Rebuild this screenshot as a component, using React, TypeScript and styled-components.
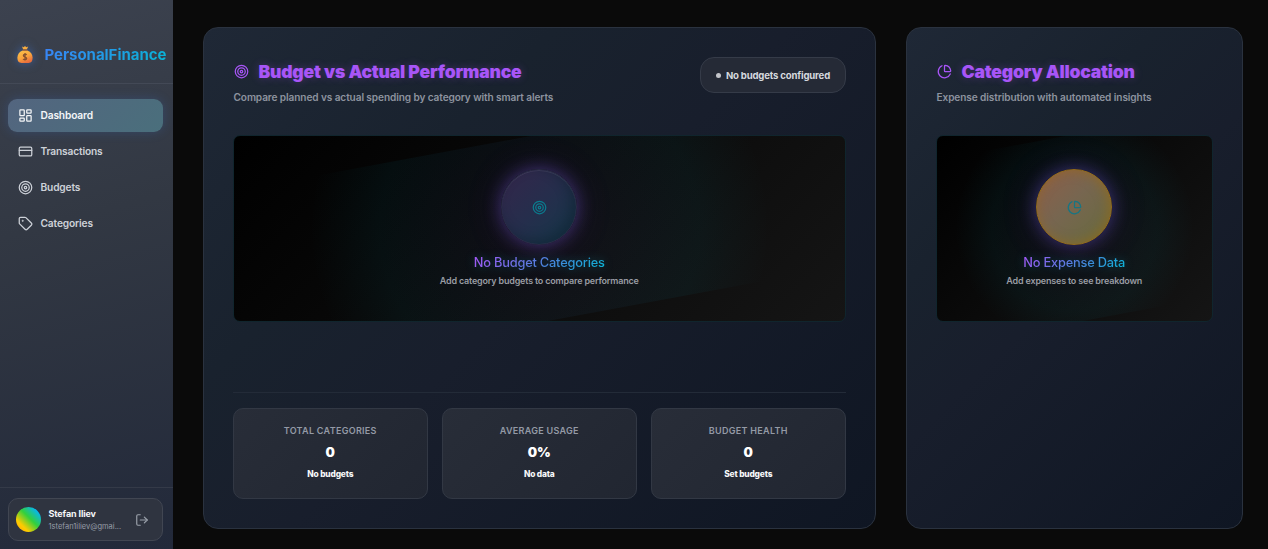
import React from 'react';
import styled, { createGlobalStyle, css } from 'styled-components';
import { LayoutDashboard, CreditCard, Target, Tag, LogOut, PieChart } from 'lucide-react';

const GlobalStyle = createGlobalStyle`
  *, *::before, *::after { box-sizing: border-box; }
  body {
    margin: 0;
    background: #0a0a0a;
    font-family: Inter, sans-serif;
    color: #fff;
    overflow: hidden;
  }
  h1, h2, h3, p { margin: 0; }
`;

const Shell = styled.div`
  display: flex;
  width: 100%;
  height: 549px;
`;

const Sidebar = styled.aside`
  display: flex;
  flex-direction: column;
  flex: none;
  width: 173px;
  background: linear-gradient(165deg, #3c424f 0%, #323843 40%, #22293a 100%);
`;

const Brand = styled.div`
  display: flex;
  align-items: center;
  gap: 11.5px;
  height: 84px;
  padding: 26px 0 0 17px;
  border-bottom: 1px solid #434956;
`;

const BagSlot = styled.span`
  display: flex;
  filter: drop-shadow(0 0 5px rgba(59, 130, 246, 0.5));
`;

const BrandName = styled.h1`
  font-size: 15px;
  line-height: 20px;
  font-weight: 700;
  letter-spacing: -0.03px;
  background: linear-gradient(135deg, #3b82f6, #06b6d4);
  -webkit-background-clip: text;
  background-clip: text;
  color: transparent;
`;

const Nav = styled.nav`
  display: flex;
  flex-direction: column;
  gap: 3px;
  flex: 1;
  padding: 15px 10px 0 8px;
`;

const NavItem = styled.a<{ $active?: boolean }>`
  display: flex;
  align-items: center;
  gap: 7.5px;
  height: 33px;
  padding: 0 10px;
  border-radius: 9px;
  font-size: 10.2px;
  line-height: 13px;
  font-weight: 600;
  letter-spacing: -0.15px;
  color: #cdd1d8;
  svg { flex: none; }
  ${p => p.$active && css`
    color: #f4f6f8;
    background: linear-gradient(135deg, #53657f, #4a6f7c);
    box-shadow: 0 0 12px rgba(59, 130, 246, 0.2);
  `}
`;

const SidebarFooter = styled.div`
  height: 62px;
  padding: 10px 10px 0 8px;
  border-top: 1px solid #343a48;
`;

const UserCard = styled.div`
  display: flex;
  align-items: center;
  height: 43px;
  padding: 0 13px 0 7px;
  border: 1px solid #414652;
  border-radius: 10px;
  background: #2f3440;
`;

const Avatar = styled.span`
  flex: none;
  width: 25px;
  height: 25px;
  border-radius: 50%;
  background: linear-gradient(45deg, #ff9f0a 0%, #ffcc00 25%, #32d03c 55%, #06b6f0 85%, #3b82f6 100%);
`;

const UserText = styled.div`
  flex: 1;
  padding-left: 7.5px;
  min-width: 0;
`;

const UserName = styled.div`
  padding-top: 1px;
  font-size: 9px;
  line-height: 12px;
  font-weight: 700;
  letter-spacing: -0.12px;
  color: #f5f6f8;
`;

const UserMail = styled.div`
  padding-top: 1px;
  font-size: 7.5px;
  line-height: 12px;
  color: #969ca7;
  white-space: nowrap;
`;

const Main = styled.main`
  display: grid;
  grid-template-columns: 673px 337px;
  gap: 30px;
  padding: 27px 25px 20px 30px;
`;

const Card = styled.section`
  display: flex;
  flex-direction: column;
  padding: 29px 29.5px 29px 29px;
  border: 1px solid #2a323f;
  border-radius: 15px;
  background: linear-gradient(135deg, #1f2836 0%, #19222e 30%, #181e2c 50%, #0f1623 100%);
`;

const CardHead = styled.header`
  display: flex;
  justify-content: space-between;
  align-items: flex-start;
  height: 78px;
  padding-left: 0.5px;
`;

const TitleRow = styled.div`
  display: flex;
  align-items: center;
  gap: 10px;
  height: 30px;
  color: #a855f7;
  svg { margin-top: -2px; }
`;

const Title = styled.h2`
  font-size: 17.6px;
  line-height: 24px;
  font-weight: 900;
  letter-spacing: -0.22px;
  text-shadow: 0 0 8px rgba(168, 85, 247, 0.3);
`;

const Subtitle = styled.p`
  margin-top: 3px;
  font-size: 10.1px;
  line-height: 14px;
  font-weight: 600;
  letter-spacing: -0.1px;
  color: #8d939f;
`;

const StatusPill = styled.div`
  display: flex;
  align-items: center;
  gap: 5px;
  height: 36px;
  padding: 0 14.5px;
  border: 1px solid #353b48;
  border-radius: 14px;
  background: #252a36;
  font-size: 9.6px;
  line-height: 13px;
  font-weight: 700;
  letter-spacing: -0.18px;
  color: #d5d8de;
`;

const Dot = styled.span`
  width: 5px;
  height: 5px;
  border-radius: 50%;
  background: #c3c5ca;
`;

const ChartArea = styled.div`
  position: relative;
  display: flex;
  flex-direction: column;
  align-items: center;
  height: 187px;
  padding-top: 33px;
  overflow: hidden;
  border: 1px solid #10252d;
  border-radius: 7px;
  background: linear-gradient(135deg, #000 0%, #151515 100%);
  &::before {
    content: '';
    position: absolute;
    inset: 0;
    transform: rotate(-10.5deg);
    background: radial-gradient(circle, rgba(139, 92, 246, 0.05) 0%, rgba(6, 182, 212, 0.05) 50%, transparent 72%);
  }
  > * { position: relative; }
`;

const Orb = styled.div<{ $tone: 'dusk' | 'amber' }>`
  display: flex;
  align-items: center;
  justify-content: center;
  flex: none;
  width: 76px;
  height: 76px;
  border-radius: 50%;
  ${p => p.$tone === 'dusk' ? css`
    color: #0b7b8d;
    border: 1px solid #2b2b48;
    background: linear-gradient(135deg, #34264b 0%, #252e4c 50%, #143849 100%);
    box-shadow: 0 0 18px rgba(125, 92, 236, 0.42), 0 0 44px rgba(168, 85, 247, 0.11),
      inset 0 1px 0 rgba(255, 255, 255, 0.08), inset -5px -4px 12px rgba(10, 25, 38, 0.4);
  ` : css`
    color: #177583;
    border: 1px solid #936b1f;
    background: linear-gradient(135deg, #8e5e48 0%, #776650 45%, #666b3d 100%);
    box-shadow: 0 0 18px rgba(110, 92, 236, 0.42), 0 0 44px rgba(168, 85, 247, 0.1),
      inset -2px 0 12px rgba(160, 105, 10, 0.55);
  `}
`;

const EmptyTitle = styled.h3`
  margin-top: 9px;
  font-size: 12.8px;
  line-height: 18px;
  font-weight: 500;
  letter-spacing: -0.2px;
  background: linear-gradient(135deg, #a855f7 0%, #4a84dd 55%, #06b6d4 100%);
  -webkit-background-clip: text;
  background-clip: text;
  color: transparent;
  filter: drop-shadow(0 0 5px rgba(6, 182, 212, 0.3));
`;

const EmptyText = styled.p`
  margin-top: 2px;
  font-size: 9px;
  line-height: 13px;
  font-weight: 600;
  letter-spacing: -0.19px;
  color: #999ca3;
`;

const Stats = styled.div`
  display: grid;
  grid-template-columns: repeat(3, 1fr);
  gap: 14.5px;
  margin-top: auto;
  padding-top: 15px;
  border-top: 1px solid #232b38;
`;

const Stat = styled.div`
  display: flex;
  flex-direction: column;
  align-items: center;
  height: 91px;
  padding-top: 15px;
  border: 1px solid #323844;
  border-radius: 10px;
  background: linear-gradient(135deg, #282d38, #212631);
`;

const StatLabel = styled.div`
  font-size: 9px;
  line-height: 14px;
  font-weight: 600;
  letter-spacing: 0.3px;
  color: #949aa6;
`;

const StatValue = styled.div`
  margin-top: 5px;
  font-size: 13.2px;
  line-height: 18px;
  font-weight: 900;
`;

const StatNote = styled.div`
  margin-top: 7px;
  font-size: 8.4px;
  line-height: 12px;
  font-weight: 800;
  letter-spacing: -0.17px;
  color: #f6f7f9;
`;

const MoneyBag = () => (
  <svg width="16" height="18" viewBox="0 0 16 18">
    <defs>
      <linearGradient id="bag" x1="0" y1="0" x2="0.5" y2="1">
        <stop offset="0" stopColor="#fcc54a" />
        <stop offset="0.6" stopColor="#f9a53e" />
        <stop offset="1" stopColor="#e96f3c" />
      </linearGradient>
    </defs>
    <path d="M5 .5 L6.7 1.2 L8 0 L9.3 1.2 L11.2 .5 L9.8 3.6 H6.2Z" fill="#f8ad3e" />
    <path d="M6 4.2H10C13.4 5.4 15.6 8 15.6 11.6C15.6 15.4 14 17 11.5 17H4.5C2 17 .4 15.4 .4 11.6C.4 8 2.6 5.4 6 4.2Z" fill="url(#bag)" />
    <path d="M5.8 4.1H10.2" stroke="#8d4b34" strokeWidth="1" strokeLinecap="round" />
    <path d="M9.6 9C8.9 7.9 6.4 8 6.4 9.6C6.4 11.2 9.5 10.8 9.6 12.4C9.6 14 7 14.2 6.2 13M8 7V14.6" fill="none" stroke="#86502e" strokeWidth="1.3" />
  </svg>
);

const navItems = [
  { label: 'Dashboard', Icon: LayoutDashboard, active: true },
  { label: 'Transactions', Icon: CreditCard },
  { label: 'Budgets', Icon: Target },
  { label: 'Categories', Icon: Tag },
];

const stats = [
  { label: 'TOTAL CATEGORIES', value: '0', note: 'No budgets' },
  { label: 'AVERAGE USAGE', value: '0%', note: 'No data' },
  { label: 'BUDGET HEALTH', value: '0', note: 'Set budgets' },
];

export default function App() {
  return (
    <Shell>
      <GlobalStyle />
      <Sidebar>
        <Brand>
          <BagSlot><MoneyBag /></BagSlot>
          <BrandName>PersonalFinance</BrandName>
        </Brand>
        <Nav>
          {navItems.map(({ label, Icon, active }) => (
            <NavItem key={label} $active={active}>
              <Icon size={15} strokeWidth={2} />
              {label}
            </NavItem>
          ))}
        </Nav>
        <SidebarFooter>
          <UserCard>
            <Avatar />
            <UserText>
              <UserName>Stefan Iliev</UserName>
              <UserMail>1stefan1iliev@gmai...</UserMail>
            </UserText>
            <LogOut size={14} color="#9ba1ab" strokeWidth={2} />
          </UserCard>
        </SidebarFooter>
      </Sidebar>
      <Main>
        <Card>
          <CardHead>
            <div>
              <TitleRow>
                <Target size={15} />
                <Title>Budget vs Actual Performance</Title>
              </TitleRow>
              <Subtitle>Compare planned vs actual spending by category with smart alerts</Subtitle>
            </div>
            <StatusPill><Dot />No budgets configured</StatusPill>
          </CardHead>
          <ChartArea>
            <Orb $tone="dusk"><Target size={15} /></Orb>
            <EmptyTitle>No Budget Categories</EmptyTitle>
            <EmptyText>Add category budgets to compare performance</EmptyText>
          </ChartArea>
          <Stats>
            {stats.map(s => (
              <Stat key={s.label}>
                <StatLabel>{s.label}</StatLabel>
                <StatValue>{s.value}</StatValue>
                <StatNote>{s.note}</StatNote>
              </Stat>
            ))}
          </Stats>
        </Card>
        <Card>
          <CardHead>
            <div>
              <TitleRow>
                <PieChart size={15} />
                <Title>Category Allocation</Title>
              </TitleRow>
              <Subtitle>Expense distribution with automated insights</Subtitle>
            </div>
          </CardHead>
          <ChartArea>
            <Orb $tone="amber"><PieChart size={15} /></Orb>
            <EmptyTitle>No Expense Data</EmptyTitle>
            <EmptyText>Add expenses to see breakdown</EmptyText>
          </ChartArea>
        </Card>
      </Main>
    </Shell>
  );
}
